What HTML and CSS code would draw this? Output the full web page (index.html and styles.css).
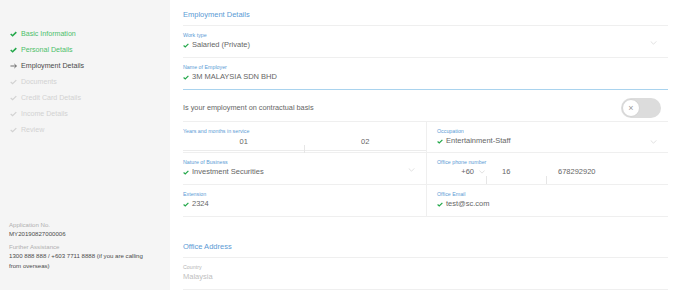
FILE: index.html
```html
<!DOCTYPE html>
<html lang="en">
<head>
    <meta charset="UTF-8">
    <title>Employment Details</title>
    <link rel="stylesheet" href="styles.css">
</head>
<body>

<div class="page">
    <aside class="sidebar">
        <ul class="steps">
            <li class="step done"><svg class="step-icon" viewBox="0 0 8 6"><polyline points="0.8,3 3,5 7.2,0.8"/></svg>Basic Information</li>
            <li class="step done"><svg class="step-icon" viewBox="0 0 8 6"><polyline points="0.8,3 3,5 7.2,0.8"/></svg>Personal Details</li>
            <li class="step current"><svg class="step-icon" viewBox="0 0 8 6"><polyline points="0.5,3 7.3,3"/><polyline points="5,0.8 7.3,3 5,5.2"/></svg>Employment Details</li>
            <li class="step"><svg class="step-icon" viewBox="0 0 8 6"><polyline points="0.8,3 3,5 7.2,0.8"/></svg>Documents</li>
            <li class="step"><svg class="step-icon" viewBox="0 0 8 6"><polyline points="0.8,3 3,5 7.2,0.8"/></svg>Credit Card Details</li>
            <li class="step"><svg class="step-icon" viewBox="0 0 8 6"><polyline points="0.8,3 3,5 7.2,0.8"/></svg>Income Details</li>
            <li class="step"><svg class="step-icon" viewBox="0 0 8 6"><polyline points="0.8,3 3,5 7.2,0.8"/></svg>Review</li>
        </ul>

        <div class="info">
            <div class="info-group">
                <div class="info-label">Application No.</div>
                <div class="info-value">MY20190827000006</div>
            </div>
            <div class="info-group">
                <div class="info-label">Further Assistance</div>
                <div class="info-value">1300 888 888 / +603 7711 8888 (if you are calling from overseas)</div>
            </div>
        </div>
    </aside>

    <main class="main">
        <div class="section-title">Employment Details</div>

        <div class="field">
            <div class="label">Work type</div>
            <div class="value"><svg class="tick" viewBox="0 0 8 6"><polyline points="0.8,3 3,5 7.2,0.8"/></svg>Salaried (Private)</div>
            <svg class="chevron" viewBox="0 0 8 5"><polyline points="0.5,0.5 4,4 7.5,0.5"/></svg>
        </div>

        <div class="field active">
            <div class="label">Name of Employer</div>
            <div class="value"><svg class="tick" viewBox="0 0 8 6"><polyline points="0.8,3 3,5 7.2,0.8"/></svg>3M MALAYSIA SDN BHD</div>
        </div>

        <div class="toggle-row">
            <span>Is your employment on contractual basis</span>
            <div class="toggle">
                <div class="knob">&times;</div>
            </div>
        </div>

        <div class="grid">
            <div class="field cell">
                <div class="label">Years and months in service</div>
                <div class="split">
                    <div class="part centered tick-right">01</div>
                    <div class="part centered">02</div>
                </div>
            </div>
            <div class="field cell">
                <div class="label">Occupation</div>
                <div class="value"><svg class="tick" viewBox="0 0 8 6"><polyline points="0.8,3 3,5 7.2,0.8"/></svg>Entertainment-Staff</div>
                <svg class="chevron" viewBox="0 0 8 5"><polyline points="0.5,0.5 4,4 7.5,0.5"/></svg>
            </div>

            <div class="field cell">
                <div class="label">Nature of Business</div>
                <div class="value"><svg class="tick" viewBox="0 0 8 6"><polyline points="0.8,3 3,5 7.2,0.8"/></svg>Investment Securities</div>
                <svg class="chevron" viewBox="0 0 8 5"><polyline points="0.5,0.5 4,4 7.5,0.5"/></svg>
            </div>
            <div class="field cell">
                <div class="label">Office phone number</div>
                <div class="phone">
                    <div class="phone-code tick-right">+60<svg class="mini-chevron" viewBox="0 0 8 5"><polyline points="0.5,0.5 4,4 7.5,0.5"/></svg></div>
                    <div class="phone-area tick-right">16</div>
                    <div class="phone-number">678292920</div>
                </div>
            </div>

            <div class="field cell">
                <div class="label">Extension</div>
                <div class="value"><svg class="tick" viewBox="0 0 8 6"><polyline points="0.8,3 3,5 7.2,0.8"/></svg>2324</div>
            </div>
            <div class="field cell">
                <div class="label">Office Email</div>
                <div class="value"><svg class="tick" viewBox="0 0 8 6"><polyline points="0.8,3 3,5 7.2,0.8"/></svg>test@sc.com</div>
            </div>
        </div>

        <div class="section-title spaced">Office Address</div>

        <div class="field">
            <div class="label muted">Country</div>
            <div class="value muted">Malaysia</div>
        </div>
    </main>
</div>

</body>
</html>
```

FILE: styles.css
```css
body {
    margin: 0;
    padding: 0;
    font-family: 'Liberation Sans', Arial, sans-serif;
    color: #666;
    background: #fff;
    overflow: hidden;
}
.page {
    display: flex;
    height: 290px;
}

/* sidebar */
.sidebar {
    width: 170px;
    flex-shrink: 0;
    background-color: #f5f5f5;
    display: flex;
    flex-direction: column;
    padding: 26px 0 20px 0;
    box-sizing: border-box;
}
.steps {
    list-style: none;
    margin: 0;
    padding: 0 0 0 10px;
}
.step {
    display: flex;
    align-items: center;
    height: 16px;
    font-size: 7.1px;
    color: #d2d2d2;
}
.step-icon {
    width: 7px;
    height: 6px;
    margin-right: 4px;
    fill: none;
    stroke: #d2d2d2;
    stroke-width: 1.4;
}
.step.done {
    color: #4cbf6a;
}
.step.done .step-icon {
    stroke: #23a84a;
    stroke-width: 1.8;
}
.step.current {
    color: #4a4a4a;
}
.step.current .step-icon {
    stroke: #4a4a4a;
    stroke-width: 0.9;
}
.info {
    width: 140px;
    margin-top: auto;
    padding-left: 9px;
    font-size: 6.1px;
    line-height: 9.5px;
}
.info-group + .info-group {
    margin-top: 3px;
}
.info-label {
    color: #b0b0b0;
}
.info-value {
    color: #4a4a4a;
}

/* main form */
.main {
    flex: 1;
    padding: 0 12px 0 13px;
}
.section-title {
    font-size: 7.5px;
    line-height: 12px;
    color: #5b9bd5;
    padding: 9px 0 4px 0;
    border-bottom: 1px solid #efefef;
}
.section-title.spaced {
    padding-top: 24px;
}
.field {
    position: relative;
    padding: 5px 0 5px 0;
    height: 21px;
    border-bottom: 1px solid #efefef;
}
.field.active {
    border-bottom-color: #a9d3ee;
}
.label {
    font-size: 5.3px;
    line-height: 8px;
    color: #5b9bd5;
}
.value {
    display: flex;
    align-items: center;
    font-size: 7.5px;
    line-height: 12px;
    color: #666;
}
.muted {
    color: #b5b5b5;
}
.value.muted {
    color: #c0c0c0;
}
.tick {
    width: 6px;
    height: 5px;
    margin-right: 3px;
    fill: none;
    stroke: #23a84a;
    stroke-width: 1.6;
}
.chevron {
    position: absolute;
    right: 11px;
    top: 15px;
    width: 7px;
    height: 4px;
    fill: none;
    stroke: #cfcfcf;
    stroke-width: 0.8;
}

/* toggle */
.toggle-row {
    display: flex;
    align-items: center;
    justify-content: space-between;
    height: 27px;
    padding-top: 4px;
    padding-right: 7px;
    font-size: 7.3px;
    color: #666;
    border-bottom: 1px solid #efefef;
}
.toggle {
    width: 40px;
    height: 20px;
    border-radius: 10px;
    background-color: #dcdcdc;
    display: flex;
    align-items: center;
}
.knob {
    width: 18px;
    height: 18px;
    border-radius: 50%;
    background-color: #fff;
    border: 1px solid #d4d4d4;
    box-sizing: border-box;
    margin-left: 1px;
    display: flex;
    align-items: center;
    justify-content: center;
    font-size: 9px;
    color: #999;
}

/* two column area */
.grid {
    display: grid;
    grid-template-columns: 244px 1fr;
}
.cell {
    height: 20px;
}
.cell:nth-child(odd) {
    border-right: 1px solid #efefef;
}
.cell:nth-child(even) {
    padding-left: 10px;
}
.cell:nth-child(n+3) {
    height: 21px;
}
.cell:nth-child(n+3) .chevron {
    top: 15px;
}
.cell .chevron {
    top: 18px;
}
.split {
    display: flex;
    font-size: 7.5px;
    line-height: 12px;
    margin-top: 1px;
    color: #666;
}
.part {
    position: relative;
    flex: 1;
    text-align: center;
    border-bottom: 1px solid #ececec;
    padding-bottom: 2px;
}
.tick-right::after {
    content: '';
    position: absolute;
    right: 0;
    bottom: -3px;
    width: 1px;
    height: 8px;
    background-color: #e6e6e6;
}
.phone {
    display: flex;
    font-size: 7.5px;
    line-height: 12px;
    height: 18px;
    color: #666;
}
.phone-code {
    position: relative;
    width: 50px;
    display: flex;
    align-items: flex-start;
    justify-content: flex-end;
    padding-right: 2px;
    box-sizing: border-box;
}
.mini-chevron {
    width: 6px;
    height: 4px;
    margin: 4px 0 0 5px;
    fill: none;
    stroke: #cfcfcf;
    stroke-width: 0.8;
}
.phone-area {
    position: relative;
    width: 60px;
    padding-left: 15px;
    box-sizing: border-box;
}
.phone-number {
    padding-left: 11px;
}
.phone .tick-right::after {
    bottom: 0;
}
```
